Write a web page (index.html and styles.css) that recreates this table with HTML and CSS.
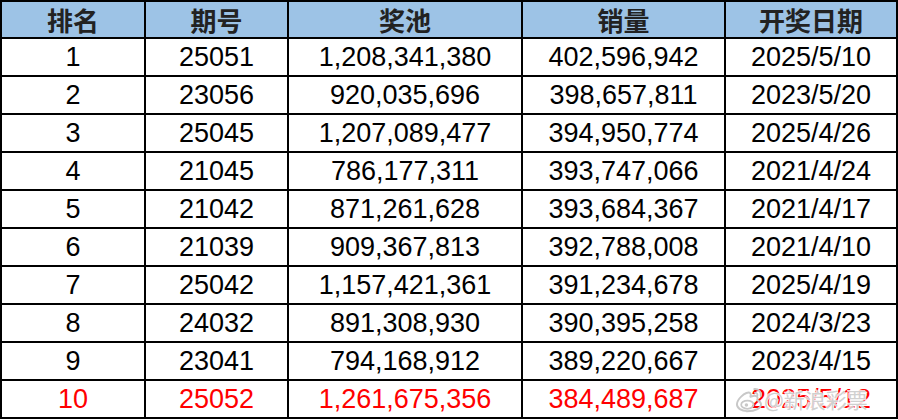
FILE: index.html
```html
<!DOCTYPE html>
<html lang="zh">
<head>
<meta charset="utf-8">
<link rel="stylesheet" href="styles.css">
</head>
<body>
<table class="sheet">
  <colgroup>
    <col class="c1"><col class="c2"><col class="c3"><col class="c4"><col class="c5">
  </colgroup>
  <thead>
    <tr class="head"><th>排名</th><th>期号</th><th>奖池</th><th>销量</th><th>开奖日期</th></tr>
  </thead>
  <tbody>
    <tr><td>1</td><td>25051</td><td>1,208,341,380</td><td>402,596,942</td><td>2025/5/10</td></tr>
    <tr><td>2</td><td>23056</td><td>920,035,696</td><td>398,657,811</td><td>2023/5/20</td></tr>
    <tr><td>3</td><td>25045</td><td>1,207,089,477</td><td>394,950,774</td><td>2025/4/26</td></tr>
    <tr><td>4</td><td>21045</td><td>786,177,311</td><td>393,747,066</td><td>2021/4/24</td></tr>
    <tr><td>5</td><td>21042</td><td>871,261,628</td><td>393,684,367</td><td>2021/4/17</td></tr>
    <tr><td>6</td><td>21039</td><td>909,367,813</td><td>392,788,008</td><td>2021/4/10</td></tr>
    <tr><td>7</td><td>25042</td><td>1,157,421,361</td><td>391,234,678</td><td>2025/4/19</td></tr>
    <tr><td>8</td><td>24032</td><td>891,308,930</td><td>390,395,258</td><td>2024/3/23</td></tr>
    <tr><td>9</td><td>23041</td><td>794,168,912</td><td>389,220,667</td><td>2023/4/15</td></tr>
    <tr class="hot"><td>10</td><td>25052</td><td>1,261,675,356</td><td>384,489,687</td><td class="wm-cell">2025/5/12<span class="watermark"><svg class="wb" viewBox="0 0 30 30" width="29" height="29"><path d="M12.5 27c-6 0-10.5-3-10.5-7 0-2.5 1.6-5.3 4.4-8 3.6-3.6 7.7-5.2 9.3-3.6.7.7.8 1.9.3 3.3-.3.8.7.4.7.4 2.8-1.2 5.3-1.2 6.3.2.6.8.5 1.9 0 3.100-.2.6.1.7.5.8 1.8.6 3.4 1.8 3.4 3.900 0 3.4-5 7-14.4 7z" fill="none" stroke="#c8c8c8" stroke-width="2"/><ellipse cx="12.8" cy="20.4" rx="6.4" ry="4.2" fill="none" stroke="#c8c8c8" stroke-width="1.8"/><circle cx="11.8" cy="20.6" r="1.8" fill="#c8c8c8"/><path d="M20 4.2c4.3-.6 7.6 3 6.6 7.2" fill="none" stroke="#c8c8c8" stroke-width="2" stroke-linecap="round"/><path d="M20.6 8.2c1.8-.3 3 1.2 2.6 2.9" fill="none" stroke="#c8c8c8" stroke-width="1.8" stroke-linecap="round"/></svg><span class="wm-text">@新浪彩票</span></span></td></tr>
  </tbody>
</table>
</body>
</html>
```

FILE: styles.css
```css
html, body {
  margin: 0;
  padding: 0;
  background: #ffffff;
}

.sheet {
  border-collapse: separate;
  border-spacing: 2px;
  background: #000000;
  width: 898px;
  table-layout: fixed;
}

.c1 { width: 142px; }
.c2 { width: 141px; }
.c3 { width: 232px; }
.c4 { width: 201px; }
.c5 { width: 170px; }

.sheet th,
.sheet td {
  padding: 0;
  text-align: center;
  vertical-align: middle;
  white-space: nowrap;
  overflow: visible;
}

.head th {
  height: 35px;
  background: #9dc3e6;
  color: #222222;
  font-family: "Noto Sans CJK SC", "Noto Sans", sans-serif;
  font-weight: 700;
  font-size: 26px;
  line-height: 35px;
}

.sheet td {
  height: 36px;
  background: #ffffff;
  color: #000000;
  font-family: "Liberation Sans", Arial, sans-serif;
  font-size: 27px;
  line-height: 36px;
}

.hot td {
  color: #ff0000;
}

.wm-cell {
  position: relative;
}

.watermark {
  position: absolute;
  left: 9px;
  top: 3px;
  display: flex;
  align-items: center;
  pointer-events: none;
}

.wb {
  display: block;
}

.wm-text {
  font-family: "Noto Sans CJK SC", sans-serif;
  font-size: 21px;
  line-height: 30px;
  color: rgba(200, 200, 200, 0.85);
  text-shadow: 0 0 1px #fff, 1px 1px 0 rgba(255,255,255,0.8), -1px -1px 0 rgba(255,255,255,0.8);
}
```
